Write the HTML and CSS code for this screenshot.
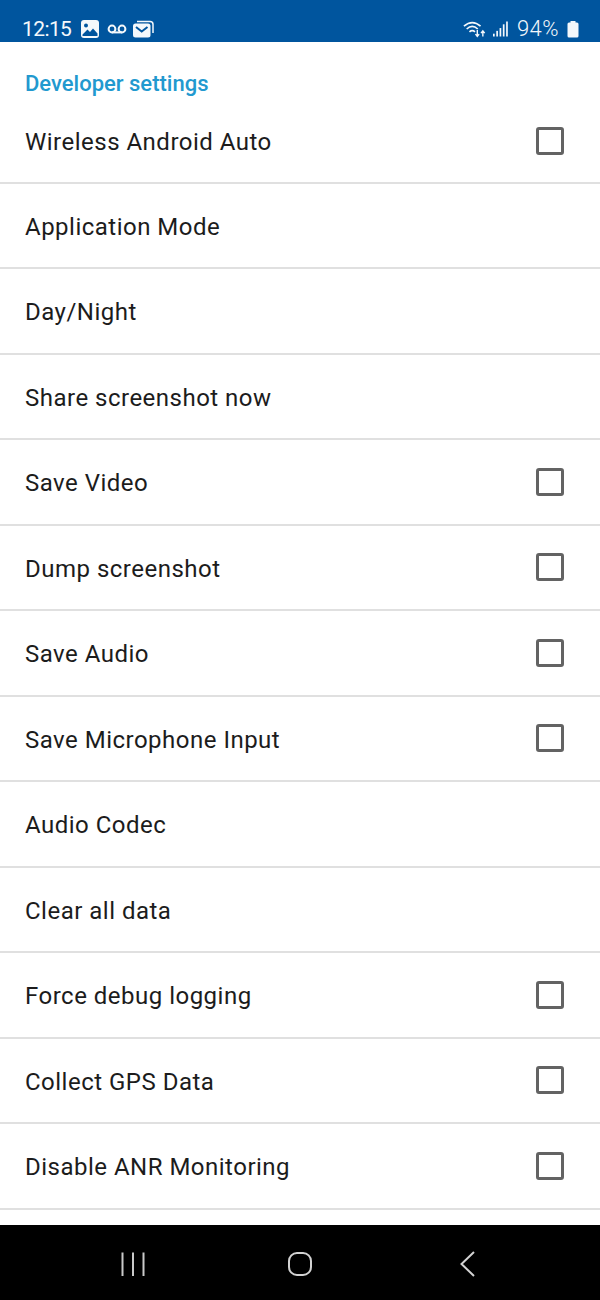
FILE: index.html
```html
<!DOCTYPE html>
<html lang="en">
<head>
<meta charset="utf-8">
<title>Developer settings</title>
<link rel="stylesheet" href="styles.css">
</head>
<body>
<div class="phone">
  <header class="status">
    <div class="status-left">
      <span class="time">12:15</span>
      <svg class="ic-gallery" width="18" height="18" viewBox="0 0 18 18"><rect x="0" y="0" width="18" height="18" rx="3" fill="#f4f8fb"/><circle cx="5" cy="5.5" r="2" fill="#00559e"/><path d="M1.5 14.5 L6.5 9.5 L9 12 L12 8.5 L16.5 13.5 L16.5 16 L1.5 16 Z" fill="#00559e"/></svg>
      <svg class="ic-voicemail" width="20" height="10" viewBox="0 0 20 10"><circle cx="5" cy="5" r="3.4" fill="none" stroke="#f4f8fb" stroke-width="2"/><circle cx="15" cy="5" r="3.4" fill="none" stroke="#f4f8fb" stroke-width="2"/><path d="M5 8.4 H15" stroke="#f4f8fb" stroke-width="2"/></svg>
      <svg class="ic-mail" width="21" height="18" viewBox="0 0 21 18"><path d="M4 1.5 H17 Q20 1.5 20 4.5 V13" fill="none" stroke="#f4f8fb" stroke-width="1.5"/><rect x="0" y="3.5" width="17.5" height="14" rx="2.5" fill="#f4f8fb"/><path d="M3 7 L8.7 11.5 L14.5 7" fill="none" stroke="#00559e" stroke-width="2"/></svg>
    </div>
    <div class="status-right">
      <svg class="ic-wifi" width="24" height="20" viewBox="0 0 26 20"><g fill="none" stroke="#f4f8fb" stroke-width="1.8"><path d="M1 7 Q10 -1 19 7"/><path d="M4 10 Q10 4.500 16 10"/><path d="M7 13 Q10 10.500 13 13"/></g><path d="M15.500 11 V18 M13.500 15.500 L15.500 18 L17.500 15.500 M21.500 18 V12 M19.500 14.500 L21.500 12 L23.500 14.500" fill="none" stroke="#f4f8fb" stroke-width="1.5"/></svg>
      <svg class="ic-signal" width="15" height="18" viewBox="0 0 16 18"><g fill="#f4f8fb"><rect x="0" y="14" width="1.800" height="3"/><rect x="3.500" y="11" width="1.800" height="6"/><rect x="7" y="8" width="1.800" height="9"/><rect x="10.500" y="4" width="1.800" height="13"/><rect x="14" y="1" width="1.800" height="16"/></g></svg>
      <span class="pct">94%</span>
      <svg class="ic-batt" width="12" height="17" viewBox="0 0 12 17"><rect x="3.500" y="0" width="5" height="2" fill="#f4f8fb"/><rect x="0.500" y="1.500" width="11" height="15" rx="1.500" fill="#f4f8fb"/></svg>
    </div>
  </header>

  <main class="content">
    <h1 class="section">Developer settings</h1>
    <ul class="list">
      <li class="row first"><span>Wireless Android Auto</span><i class="check"></i></li>
      <li class="row"><span>Application Mode</span></li>
      <li class="row"><span>Day/Night</span></li>
      <li class="row"><span>Share screenshot now</span></li>
      <li class="row"><span>Save Video</span><i class="check"></i></li>
      <li class="row"><span>Dump screenshot</span><i class="check"></i></li>
      <li class="row"><span>Save Audio</span><i class="check"></i></li>
      <li class="row"><span>Save Microphone Input</span><i class="check"></i></li>
      <li class="row"><span>Audio Codec</span></li>
      <li class="row"><span>Clear all data</span></li>
      <li class="row"><span>Force debug logging</span><i class="check"></i></li>
      <li class="row"><span>Collect GPS Data</span><i class="check"></i></li>
      <li class="row"><span>Disable ANR Monitoring</span><i class="check"></i></li>
    </ul>
  </main>

  <nav class="navbar">
    <svg width="26" height="26" viewBox="0 0 26 26"><path d="M2.500 1.500 V25 M13 1.500 V25 M23.500 1.500 V25" stroke="#c9c9c9" stroke-width="2" fill="none"/></svg>
    <svg width="26" height="26" viewBox="0 0 26 26"><rect x="2" y="2" width="22" height="22" rx="8" fill="none" stroke="#d2d2d2" stroke-width="2"/></svg>
    <svg width="18" height="28" viewBox="0 0 18 28"><path d="M15 2 L2.500 14 L15 26" fill="none" stroke="#d2d2d2" stroke-width="2"/></svg>
  </nav>
</div>
</body>
</html>
```
FILE: styles.css
```css
* { box-sizing: border-box; }
html, body { margin: 0; padding: 0; }
body { width: 600px; height: 1300px; overflow: hidden; background: #fff; font-family: Roboto, "Liberation Sans", sans-serif; }
.phone { width: 600px; height: 1300px; display: flex; flex-direction: column; }

.status { flex: 0 0 42px; background: #00559e; color: #f4f8fb; display: flex; justify-content: space-between; align-items: flex-start; padding: 18px 21px 0 22px; }
.status-left, .status-right { display: flex; align-items: center; height: 22px; }
.time { font-size: 21px; line-height: 22px; width: 49px; margin-right: 10px; letter-spacing: -.6px; }
.ic-voicemail { margin: 0 6px 0 8px; }
.status-right { gap: 0; }
.ic-wifi { margin-right: 6px; }
.ic-signal { margin-right: 9px; }
.pct { font-size: 22px; line-height: 22px; width: 46px; margin-right: 4px; letter-spacing: .4px; font-weight: 300; }

.content { flex: 1 1 auto; min-height: 0; overflow: hidden; }
.section { margin: 0; padding: 29px 25px 0; height: 72px; font-size: 22px; line-height: 26px; font-weight: 500; color: #2299cf; }
.list { margin: 0; padding: 0; list-style: none; }
.row { height: 85.5px; display: flex; align-items: center; justify-content: space-between; padding: 0 36px 0 25px; border-bottom: 2px solid #e0e0e0; font-size: 24px; letter-spacing: .49px; color: #1c1c1c; }
.row span { padding-top: 3px; }
.row.first { height: 69.5px; padding-bottom: 14px; }
.check { display: block; width: 28px; height: 28px; border: 3.500px solid #636363; border-radius: 3px; }

.navbar { flex: 0 0 75px; background: #000; display: flex; align-items: center; padding: 2px 0 0 120px; }
.navbar svg:nth-child(1) { margin-right: 141px; }
.navbar svg:nth-child(2) { margin-right: 146px; }
```
